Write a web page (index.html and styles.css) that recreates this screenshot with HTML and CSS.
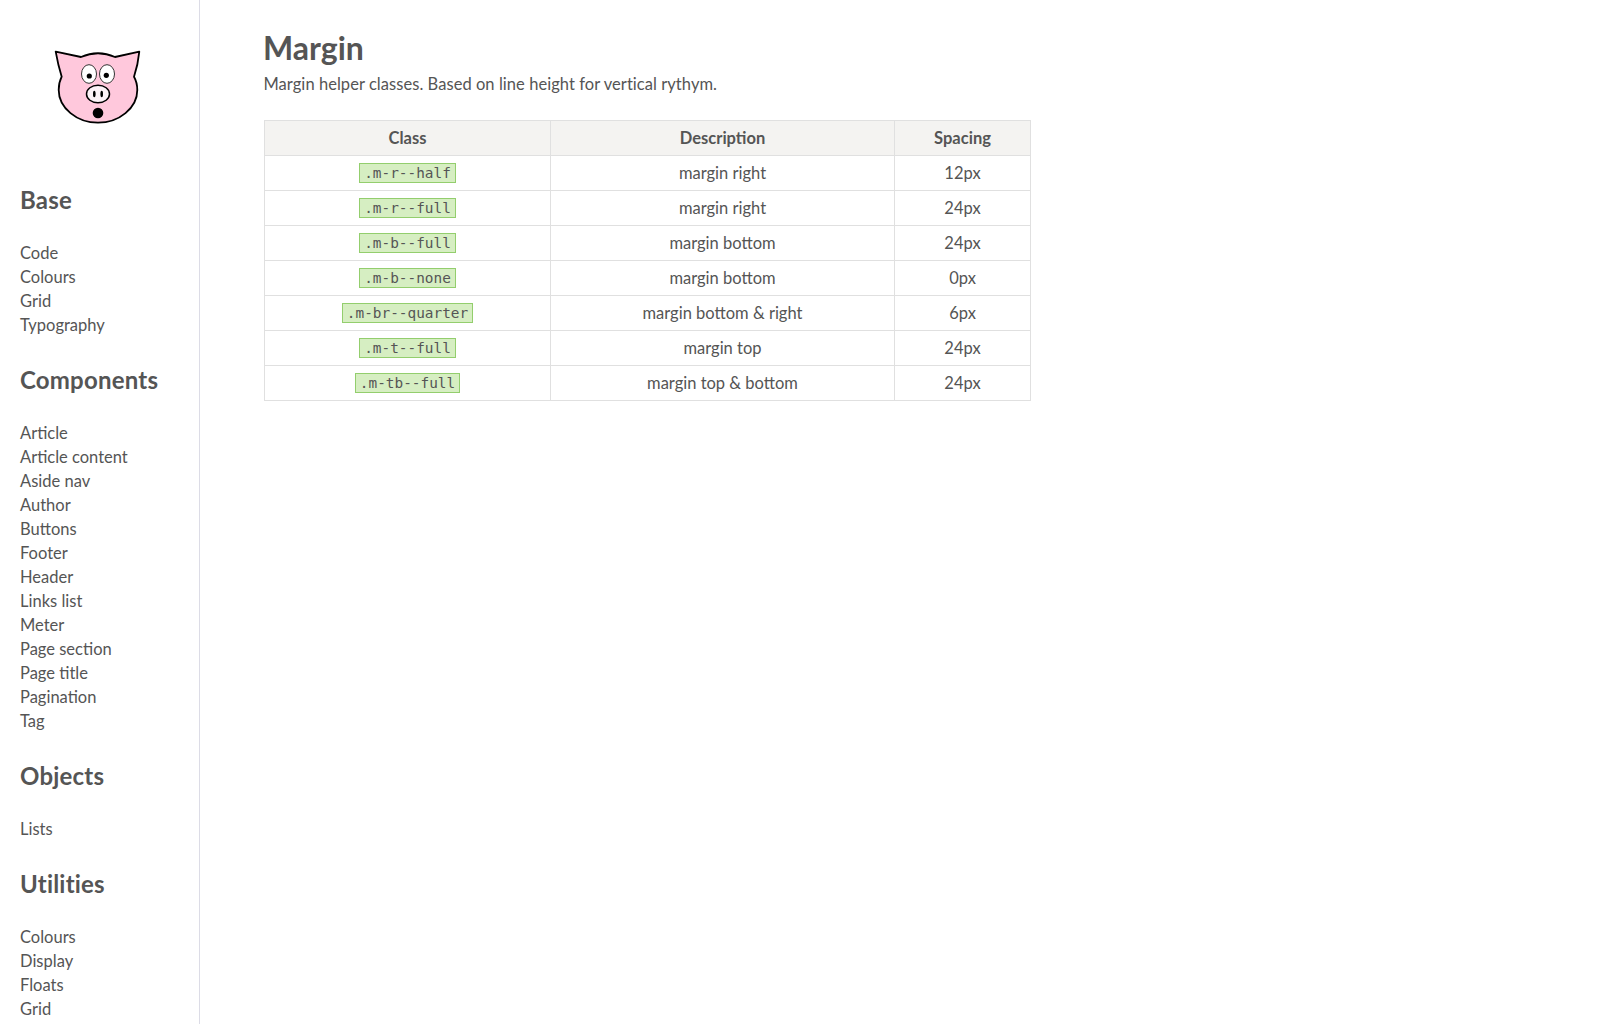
FILE: index.html
```html
<!DOCTYPE html>
<html lang="en">
<head>
    <meta charset="UTF-8">
    <title>Margin</title>
    <link rel="stylesheet" href="styles.css">
</head>
<body>
    <aside class="sidebar">
        <div class="logo">
            <svg width="90" height="76" viewBox="0 0 90 76">
                <path d="M2.700 1.700 L28 7 Q45 -0.500 62 7 L86.300 1.700 Q85 15 81 26.700 C84 32 84.300 35 84.300 40 C84.300 58 66 72.700 45 72.700 C24 72.700 5.700 58 5.700 40 C5.700 35 6 32 8.700 26.700 Q5 15 2.700 1.700 Z" fill="#ffc8dc" stroke="#000" stroke-width="1.800" stroke-linejoin="round"/>
                <ellipse cx="36" cy="24" rx="7.500" ry="9.300" fill="#fff" stroke="#333" stroke-width="1"/>
                <ellipse cx="54" cy="24" rx="7.500" ry="9.300" fill="#fff" stroke="#333" stroke-width="1"/>
                <circle cx="36.300" cy="26" r="2.600" fill="#000"/>
                <circle cx="53.300" cy="25.300" r="2.600" fill="#000"/>
                <ellipse cx="45" cy="44" rx="11.500" ry="8.800" fill="#fdf3f8" stroke="#000" stroke-width="1.500"/>
                <ellipse cx="41.300" cy="44" rx="1.300" ry="3.200" fill="#000"/>
                <ellipse cx="48.700" cy="44" rx="1.300" ry="3.200" fill="#000"/>
                <circle cx="45" cy="63" r="5.300" fill="#000"/>
            </svg>
        </div>

        <h2>Base</h2>
        <ul>
            <li><a href="#">Code</a></li>
            <li><a href="#">Colours</a></li>
            <li><a href="#">Grid</a></li>
            <li><a href="#">Typography</a></li>
        </ul>

        <h2>Components</h2>
        <ul>
            <li><a href="#">Article</a></li>
            <li><a href="#">Article content</a></li>
            <li><a href="#">Aside nav</a></li>
            <li><a href="#">Author</a></li>
            <li><a href="#">Buttons</a></li>
            <li><a href="#">Footer</a></li>
            <li><a href="#">Header</a></li>
            <li><a href="#">Links list</a></li>
            <li><a href="#">Meter</a></li>
            <li><a href="#">Page section</a></li>
            <li><a href="#">Page title</a></li>
            <li><a href="#">Pagination</a></li>
            <li><a href="#">Tag</a></li>
        </ul>

        <h2>Objects</h2>
        <ul>
            <li><a href="#">Lists</a></li>
        </ul>

        <h2>Utilities</h2>
        <ul>
            <li><a href="#">Colours</a></li>
            <li><a href="#">Display</a></li>
            <li><a href="#">Floats</a></li>
            <li><a href="#">Grid</a></li>
        </ul>
    </aside>

    <main class="content">
        <h1>Margin</h1>
        <p class="intro">Margin helper classes. Based on line height for vertical rythym.</p>

        <table class="docs-table">
            <thead>
                <tr>
                    <th class="col-class">Class</th>
                    <th class="col-desc">Description</th>
                    <th class="col-spacing">Spacing</th>
                </tr>
            </thead>
            <tbody>
                <tr><td><code>.m-r--half</code></td><td>margin right</td><td>12px</td></tr>
                <tr><td><code>.m-r--full</code></td><td>margin right</td><td>24px</td></tr>
                <tr><td><code>.m-b--full</code></td><td>margin bottom</td><td>24px</td></tr>
                <tr><td><code>.m-b--none</code></td><td>margin bottom</td><td>0px</td></tr>
                <tr><td><code>.m-br--quarter</code></td><td>margin bottom &amp; right</td><td>6px</td></tr>
                <tr><td><code>.m-t--full</code></td><td>margin top</td><td>24px</td></tr>
                <tr><td><code>.m-tb--full</code></td><td>margin top &amp; bottom</td><td>24px</td></tr>
            </tbody>
        </table>
    </main>
</body>
</html>
```

FILE: styles.css
```css
body {
    margin: 0;
    display: flex;
    height: 1024px;
    overflow: hidden;
    font-family: Lato, "Noto Sans", sans-serif;
    font-size: 16.5px;
    line-height: 24px;
    color: #555;
    background: #fff;
}
.sidebar {
    width: 179px;
    flex-shrink: 0;
    height: 1024px;
    overflow: hidden;
    padding-left: 20px;
    margin-right: 64px;
    border-right: 1px solid #dcdce6;
}
.logo {
    margin-left: 33px;
    padding-top: 50px;
    height: 76px;
    margin-bottom: 56px;
}
.logo svg {
    display: block;
}
.sidebar h2 {
    margin: 0 0 23px;
    font-size: 24px;
    line-height: 36px;
    font-weight: 700;
    letter-spacing: 0.2px;
    color: #555;
}
.sidebar ul {
    list-style: none;
    margin: 0 0 25px;
    padding: 0;
}
.sidebar a {
    color: #555;
    text-decoration: none;
}
.content {
    flex: 1;
    padding-top: 24px;
}
h1 {
    margin: 0 0 0 -1px;
    font-size: 32px;
    line-height: 48px;
    font-weight: 700;
}
.intro {
    margin: 0 0 24px -0.5px;
    letter-spacing: 0.05px;
}
.docs-table {
    border-collapse: collapse;
    width: 767px;
    table-layout: fixed;
    text-align: center;
}
.docs-table th, .docs-table td {
    border: 1px solid #e0e0e0;
    height: 34px;
    padding: 0;
}
.docs-table th {
    background: #f4f3f1;
    font-weight: 700;
}
.col-class {
    width: 285px;
}
.col-desc {
    width: 343px;
}
code {
    font-family: "DejaVu Sans Mono", "Liberation Mono", monospace;
    font-size: 14.4px;
    padding: 1px 4px;
    vertical-align: 1px;
    background: #d6eec2;
    border: 1px solid #93ce6d;
}
```
